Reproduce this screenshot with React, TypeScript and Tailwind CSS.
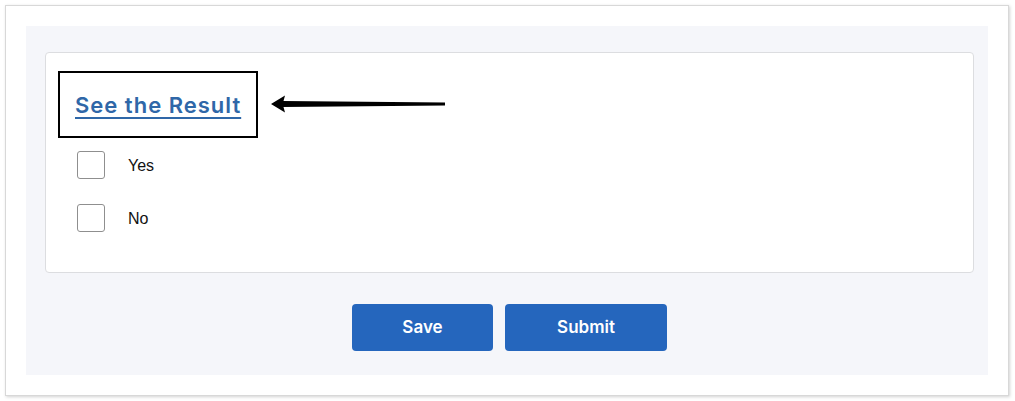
import React from "react";

const Check = ({ label }: { label: string }) => (
  <label className="flex items-center h-[28px]">
    <span className="block w-[28px] h-[28px] border border-[#8f8f8f] rounded-[3px] bg-white" />
    <span className="ml-[23px] mt-[2px] text-[16px] text-[#111] font-['Liberation_Sans',sans-serif]">{label}</span>
  </label>
);

const App = () => {
  return (
    <div className="w-[1015px] h-[401px] bg-white p-[5px] pr-[6px] pb-[5px] font-['Inter',sans-serif]">
      <div className="h-[391px] border border-[#d8d8d8] shadow-[1px_1px_3px_rgba(0,0,0,0.18)] bg-white p-[20px]">
        <div className="h-full bg-[#f5f6fa] pl-[19px] pr-[14px] pt-[26px]">
          <div className="h-[221px] bg-white border border-[#dcdde0] rounded-[4px] pl-[12px] pt-[18px]">
            <div className="flex items-center">
              <div className="w-[200px] h-[67px] border-2 border-black flex items-center pl-[15px] pt-[2px]">
                <a href="#" className="text-[22px] font-semibold text-[#2f67a8] underline underline-offset-[4px] decoration-[2px] tracking-[1px]">
                  See the Result
                </a>
              </div>
              <svg width="176" height="20" viewBox="0 0 176 20" className="ml-[13px] -mt-[2px]">
                <path d="M0 10 L14 1.5 L12.5 7 L174 8.5 L174 11.5 L12.5 13 L14 18.5 Z" fill="#000" />
              </svg>
            </div>
            <div className="pl-[19px] pt-[13px] flex flex-col gap-[25px]">
              <Check label="Yes" />
              <Check label="No" />
            </div>
          </div>
          <div className="flex justify-center gap-[12px] mt-[31px]">
            <button className="w-[141px] h-[47px] rounded-[4px] bg-[#2566bd] text-white text-[17px] font-semibold">Save</button>
            <button className="w-[162px] h-[47px] rounded-[4px] bg-[#2566bd] text-white text-[17px] font-semibold">Submit</button>
          </div>
        </div>
      </div>
    </div>
  );
};

export default App;
